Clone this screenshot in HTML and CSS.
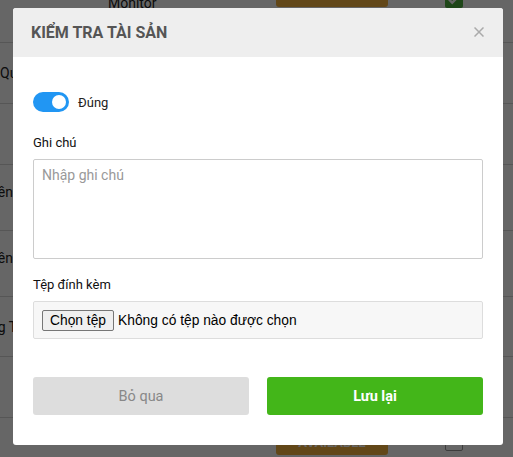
FILE: index.html
```html
<!DOCTYPE html>
<html lang="vi">
<head>
<meta charset="utf-8">
<title>Kiểm tra tài sản</title>
<link rel="stylesheet" href="styles.css">
</head>
<body>
<div class="page">
  <div class="row row-top">
    <div class="c-name"></div>
    <div class="c-model"><span class="model-text">Monitor</span></div>
    <div class="c-status"><span class="badge">AVAILABLE</span></div>
    <div class="c-check"><span class="check on"><svg viewBox="0 0 18 18" width="18" height="18"><path d="M4 9.5l3.2 3.2L14 5.8" fill="none" stroke="#fff" stroke-width="2.4"/></svg></span></div>
  </div>
  <div class="row h61"><div class="c-name"><span class="name">Quyết toán</span></div></div>
  <div class="row h61"><div class="c-name"></div></div>
  <div class="row h66"><div class="c-name up"><span class="name cut-a">Tiền mặt</span></div></div>
  <div class="row h66"><div class="c-name up"><span class="name cut-a">Tiền gửi</span></div></div>
  <div class="row h60"><div class="c-name"><span class="name cut-b">Đang Thanh lý</span></div></div>
  <div class="row h61"><div class="c-name"></div></div>
  <div class="row row-bottom">
    <div class="c-name"></div>
    <div class="c-model"></div>
    <div class="c-status"><span class="badge">AVAILABLE</span></div>
    <div class="c-check"><span class="check off"></span></div>
  </div>
</div>

<div class="overlay"></div>

<div class="modal">
  <div class="modal-header">
    <h4 class="title">KIỂM TRA TÀI SẢN</h4>
    <span class="close"><svg viewBox="0 0 10 10" width="10" height="10"><path d="M0.5 0.5L9.5 9.5M9.5 0.5L0.5 9.5" stroke="#aaa" stroke-width="1.5" fill="none"/></svg></span>
  </div>
  <div class="modal-body">
    <div class="switch-row">
      <span class="switch"><span class="knob"></span></span>
      <span class="switch-label">Đúng</span>
    </div>
    <div class="field">
      <div class="label">Ghi chú</div>
      <textarea class="textarea" placeholder="Nhập ghi chú"></textarea>
    </div>
    <div class="field">
      <div class="label">Tệp đính kèm</div>
      <div class="filebox">
        <span class="filebtn">Chọn tệp</span>
        <span class="filetext">Không có tệp nào được chọn</span>
      </div>
    </div>
    <div class="actions">
      <button class="btn btn-cancel">Bỏ qua</button>
      <button class="btn btn-save">Lưu lại</button>
    </div>
  </div>
</div>
</body>
</html>
```
FILE: styles.css
```css
* { box-sizing: border-box; }
html, body { margin: 0; padding: 0; }
body {
  background: #fff;
  font-family: Roboto, "Noto Sans", sans-serif;
  color: #333;
  width: 513px;
  height: 457px;
  overflow: hidden;
}

/* background page */
.page { display: flex; flex-direction: column; }
.row {
  display: flex;
  align-items: center;
  border-bottom: 1px solid #d6d6d6;
  font-size: 14px;
  color: #222;
}
.row-top { height: 60px; margin-top: -17px; align-items: flex-start; }
.row-bottom { height: 61px; align-items: flex-start; padding-top: 13px; border-bottom: none; }
.h61 { height: 61px; }
.h66 { height: 66px; }
.h60 { height: 60px; }
.c-name { width: 108px; overflow: hidden; white-space: nowrap; }
.c-name.up { padding-bottom: 12px; }
.c-model { width: 168px; }
.c-status { width: 169px; }
.c-check { flex: 1; }
.model-text { display: block; line-height: 16px; margin-top: 12px; font-size: 14px; }
.name { display: inline-block; }
.cut-a { margin-left: -14px; }
.cut-b { margin-left: -27px; }
.badge {
  display: block;
  width: 112px;
  height: 24px;
  border-radius: 3px;
  background: #f4b13e;
  color: #fff;
  font-weight: 700;
  font-size: 13px;
  line-height: 24px;
  text-align: center;
}
.check {
  display: block;
  width: 18px;
  height: 18px;
  border-radius: 2px;
}
.row-top .check { margin-top: 7px; }
.check.on { background: #4cae3c; }
.check.off { border: 1px solid #999; background: #fff; margin-top: 2px; }
.check svg { display: block; }

.overlay {
  position: fixed;
  inset: 0;
  background: rgba(0, 0, 0, 0.6);
}

/* modal */
.modal {
  position: fixed;
  left: 13px;
  top: 8px;
  width: 490px;
  background: #fff;
  border-radius: 3px;
  overflow: hidden;
}
.modal-header {
  height: 49px;
  background: #eee;
  display: flex;
  align-items: center;
  justify-content: space-between;
  padding: 0 19px 0 18px;
}
.title {
  margin: 0;
  font-size: 16px;
  font-weight: 700;
  color: #555;
  letter-spacing: 0;
}
.close { display: block; width: 10px; height: 10px; margin-top: -1px; }
.close svg { display: block; }

.modal-body { padding: 35px 20px 30px; }

.switch-row {
  display: flex;
  align-items: center;
  height: 20px;
  gap: 9px;
  margin-bottom: 23px;
}
.switch {
  position: relative;
  width: 36px;
  height: 20px;
  border-radius: 10px;
  background: #2196f3;
}
.knob {
  position: absolute;
  right: 3px;
  top: 3px;
  width: 14px;
  height: 14px;
  border-radius: 50%;
  background: #fff;
}
.switch-label { font-size: 13px; color: #222; }

.field { margin-bottom: 18px; }
.label {
  font-size: 13px;
  font-weight: 400;
  line-height: 16px;
  color: #111;
  margin-bottom: 8px;
}
.textarea {
  display: block;
  width: 450px;
  height: 100px;
  border: 1px solid #ccc;
  border-radius: 2px;
  padding: 7px 8px;
  font-family: Roboto, sans-serif;
  font-size: 14px;
  color: #333;
  resize: none;
  outline: none;
}
.textarea::placeholder { color: #999; }

.filebox {
  height: 38px;
  border: 1px solid #ddd;
  border-radius: 2px;
  background: #f7f7f7;
  display: flex;
  align-items: center;
  padding-left: 8px;
  font-family: "Liberation Sans", Arial, sans-serif;
  font-size: 13.8px;
  color: #000;
}
.filebtn {
  height: 21px;
  line-height: 19px;
  padding: 0 7px;
  border: 1px solid #767676;
  border-radius: 2px;
  background: #efefef;
}
.filetext { margin-left: 4px; }

.actions {
  display: grid;
  grid-template-columns: 1fr 1fr;
  gap: 18px;
  margin-top: 38px;
}
.btn {
  height: 38px;
  border: none;
  border-radius: 3px;
  font-family: Roboto, sans-serif;
  font-size: 14.5px;
}
.btn-cancel { background: #ddd; color: #888; }
.btn-save { background: #43b619; color: #fff; font-weight: 700; }
```
